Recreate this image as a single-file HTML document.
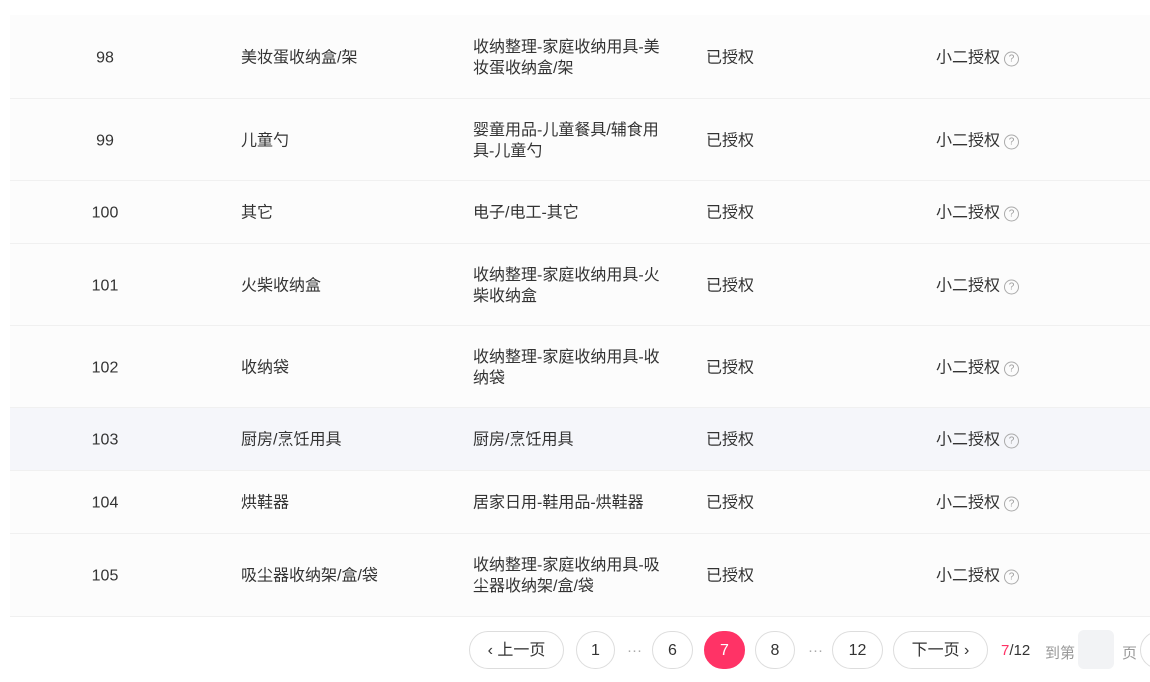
<!DOCTYPE html>
<html><head><meta charset="utf-8"><style>
body{margin:0;width:1150px;height:682px;background:#fff;overflow:hidden;position:relative;font-family:"Liberation Sans","Noto Sans CJK SC",sans-serif;font-size:16px;color:#333}
.r{position:absolute;left:10px;right:0;background:#fcfcfc;border-bottom:1px solid #f0f0f0}
.r.h{background:#f5f6fa}
.c{position:absolute;top:50%;transform:translateY(-50%);margin-top:1px;line-height:21px}
.n{left:70px;width:50px;text-align:center}
.a{left:231px}.b{left:463px;width:191px}.s{left:696px}.z{left:926px;white-space:nowrap}
.q{display:inline-block;width:13px;height:13px;border:1px solid #aaa;border-radius:50%;font-size:10px;line-height:13px;text-align:center;color:#999;vertical-align:1px;margin-left:4px}
.p{position:absolute;top:631px;height:36px;border:1px solid #ddd;border-radius:19px;line-height:37px;text-align:center;font-size:16px;color:#333;background:#fff}
.t{position:absolute;top:642px;font-size:15px;color:#999}
</style></head><body>
<div class="r" style="top:15px;height:83px"><span class="c n">98</span><span class="c a">美妆蛋收纳盒/架</span><span class="c b">收纳整理-家庭收纳用具-美妆蛋收纳盒/架</span><span class="c s">已授权</span><span class="c z">小二授权<span class="q">?</span></span></div>
<div class="r" style="top:99px;height:81px"><span class="c n">99</span><span class="c a">儿童勺</span><span class="c b">婴童用品-儿童餐具/辅食用具-儿童勺</span><span class="c s">已授权</span><span class="c z">小二授权<span class="q">?</span></span></div>
<div class="r" style="top:181px;height:62px"><span class="c n">100</span><span class="c a">其它</span><span class="c b">电子/电工-其它</span><span class="c s">已授权</span><span class="c z">小二授权<span class="q">?</span></span></div>
<div class="r" style="top:244px;height:81px"><span class="c n">101</span><span class="c a">火柴收纳盒</span><span class="c b">收纳整理-家庭收纳用具-火柴收纳盒</span><span class="c s">已授权</span><span class="c z">小二授权<span class="q">?</span></span></div>
<div class="r" style="top:326px;height:81px"><span class="c n">102</span><span class="c a">收纳袋</span><span class="c b">收纳整理-家庭收纳用具-收纳袋</span><span class="c s">已授权</span><span class="c z">小二授权<span class="q">?</span></span></div>
<div class="r h" style="top:408px;height:62px"><span class="c n">103</span><span class="c a">厨房/烹饪用具</span><span class="c b">厨房/烹饪用具</span><span class="c s">已授权</span><span class="c z">小二授权<span class="q">?</span></span></div>
<div class="r" style="top:471px;height:62px"><span class="c n">104</span><span class="c a">烘鞋器</span><span class="c b">居家日用-鞋用品-烘鞋器</span><span class="c s">已授权</span><span class="c z">小二授权<span class="q">?</span></span></div>
<div class="r" style="top:534px;height:82px"><span class="c n">105</span><span class="c a">吸尘器收纳架/盒/袋</span><span class="c b">收纳整理-家庭收纳用具-吸尘器收纳架/盒/袋</span><span class="c s">已授权</span><span class="c z">小二授权<span class="q">?</span></span></div>
<div class="p" style="left:469px;width:93px">‹ 上一页</div>
<div class="p" style="left:576px;width:37px">1</div>
<div class="t" style="left:627px;color:#aaa">···</div>
<div class="p" style="left:652px;width:39px">6</div>
<div class="p" style="left:704px;width:39px;background:#ff3366;border-color:#ff3366;color:#fff">7</div>
<div class="p" style="left:755px;width:38px">8</div>
<div class="t" style="left:808px;color:#aaa">···</div>
<div class="p" style="left:832px;width:49px">12</div>
<div class="p" style="left:893px;width:93px">下一页 ›</div>
<div class="t" style="left:1001px;color:#333"><span style="color:#ff3366">7</span>/12</div>
<div class="t" style="left:1045px">到第</div>
<div style="position:absolute;left:1078px;top:630px;width:36px;height:39px;background:#f2f3f5;border-radius:6px"></div>
<div class="t" style="left:1122px">页</div>
<div class="p" style="left:1140px;width:40px"></div>
</body></html>
